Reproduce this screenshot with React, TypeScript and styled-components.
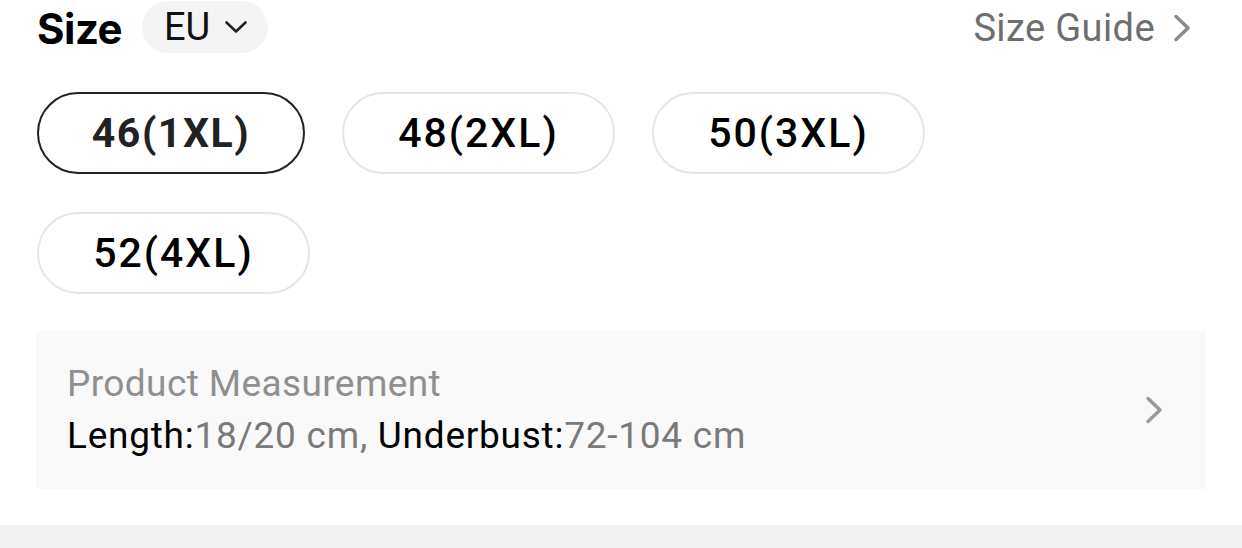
import React, { useState } from "react";
import styled, { createGlobalStyle } from "styled-components";

const GlobalStyle = createGlobalStyle`
  html, body {
    margin: 0;
    padding: 0;
    background: #ffffff;
    font-family: Roboto, "Liberation Sans", sans-serif;
    -webkit-font-smoothing: antialiased;
  }
`;

const Page = styled.div`
  width: 1242px;
  display: flex;
  flex-direction: column;
`;

const Section = styled.div`
  padding: 0 36px 36px 36px;
  display: flex;
  flex-direction: column;
`;

const Header = styled.div`
  height: 56px;
  display: flex;
  align-items: center;
  justify-content: space-between;
`;

const TitleGroup = styled.div`
  display: flex;
  align-items: center;
  gap: 20px;
  padding-left: 1px;
`;

const Title = styled.span`
  font-family: Inter, Roboto, sans-serif;
  font-weight: 700;
  font-size: 42px;
  color: #000;
  letter-spacing: -0.5px;
`;

const UnitPill = styled.button`
  height: 52px;
  width: 126px;
  border: none;
  border-radius: 26px;
  background: #f4f4f4;
  display: flex;
  align-items: center;
  justify-content: center;
  gap: 14px;
  font-family: Roboto, sans-serif;
  font-size: 38px;
  color: #111;
  padding: 0 0 0 2px;
  margin-top: -2px;
`;

const GuideLink = styled.a`
  display: flex;
  align-items: center;
  gap: 18px;
  font-family: Roboto, sans-serif;
  font-size: 38px;
  letter-spacing: 0.4px;
  color: #6e6e6e;
  margin-right: 14px;
`;

const SizeGrid = styled.div`
  margin-top: 36px;
  display: flex;
  flex-wrap: wrap;
  column-gap: 37px;
  row-gap: 38px;
  padding-left: 1px;
`;

const SizeButton = styled.button<{ $active?: boolean }>`
  height: 82px;
  width: ${(p) => (p.$active ? "268px" : "273px")};
  box-sizing: border-box;
  border-radius: 41px;
  background: #fff;
  border: ${(p) => (p.$active ? "2.5px solid #222" : "2px solid #e6e6e6")};
  font-family: Roboto, sans-serif;
  font-size: 41px;
  letter-spacing: ${(p) => (p.$active ? "1.6px" : "2px")};
  font-weight: ${(p) => (p.$active ? 700 : 500)};
  color: ${(p) => (p.$active ? "#222" : "#000")};
  display: flex;
  align-items: center;
  justify-content: center;
  padding: 0;
`;

const MeasureBox = styled.div`
  margin-top: 37px;
  height: 158px;
  background: #f9f9f9;
  display: flex;
  align-items: center;
  justify-content: space-between;
  padding: 0 42px 0 31px;
  box-sizing: border-box;
`;

const MeasureText = styled.div`
  display: flex;
  flex-direction: column;
  gap: 9px;
  padding-bottom: 2px;
`;

const MeasureLabel = styled.div`
  font-size: 37px;
  letter-spacing: 0.4px;
  color: #8f8f8f;
`;

const MeasureLine = styled.div`
  font-size: 37px;
  letter-spacing: 0.75px;
  color: #000;
`;

const Value = styled.span`
  color: #7a7a7a;
`;

const Divider = styled.div`
  height: 30px;
  background: #f0f0f0;
`;

const ChevronDown = ({ color }: { color: string }) => (
  <svg width="24" height="14" viewBox="0 0 24 14" fill="none">
    <path d="M2.5 2.5l9.5 9 9.5-9" stroke={color} strokeWidth={2.6} strokeLinecap="round" strokeLinejoin="round" />
  </svg>
);

const ChevronRight = ({ color }: { color: string }) => (
  <svg width="19" height="28" viewBox="0 0 19 28" fill="none">
    <path d="M3 2.5l12 11.5-12 11.5" stroke={color} strokeWidth={3.4} strokeLinecap="round" strokeLinejoin="round" />
  </svg>
);

const sizes = ["46(1XL)", "48(2XL)", "50(3XL)", "52(4XL)"];

const App = () => {
  const [selected, setSelected] = useState("46(1XL)");

  return (
    <Page>
      <GlobalStyle />
      <Section>
        <Header>
          <TitleGroup>
            <Title>Size</Title>
            <UnitPill>
              EU
              <ChevronDown color="#222" />
            </UnitPill>
          </TitleGroup>
          <GuideLink>
            Size Guide
            <ChevronRight color="#8a8a8a" />
          </GuideLink>
        </Header>

        <SizeGrid>
          {sizes.map((s) => (
            <SizeButton key={s} $active={s === selected} onClick={() => setSelected(s)}>
              {s}
            </SizeButton>
          ))}
        </SizeGrid>

        <MeasureBox>
          <MeasureText>
            <MeasureLabel>Product Measurement</MeasureLabel>
            <MeasureLine>
              Length:<Value>18/20 cm, </Value>Underbust:<Value>72-104 cm</Value>
            </MeasureLine>
          </MeasureText>
          <ChevronRight color="#999" />
        </MeasureBox>
      </Section>
      <Divider />
    </Page>
  );
};

export default App;
